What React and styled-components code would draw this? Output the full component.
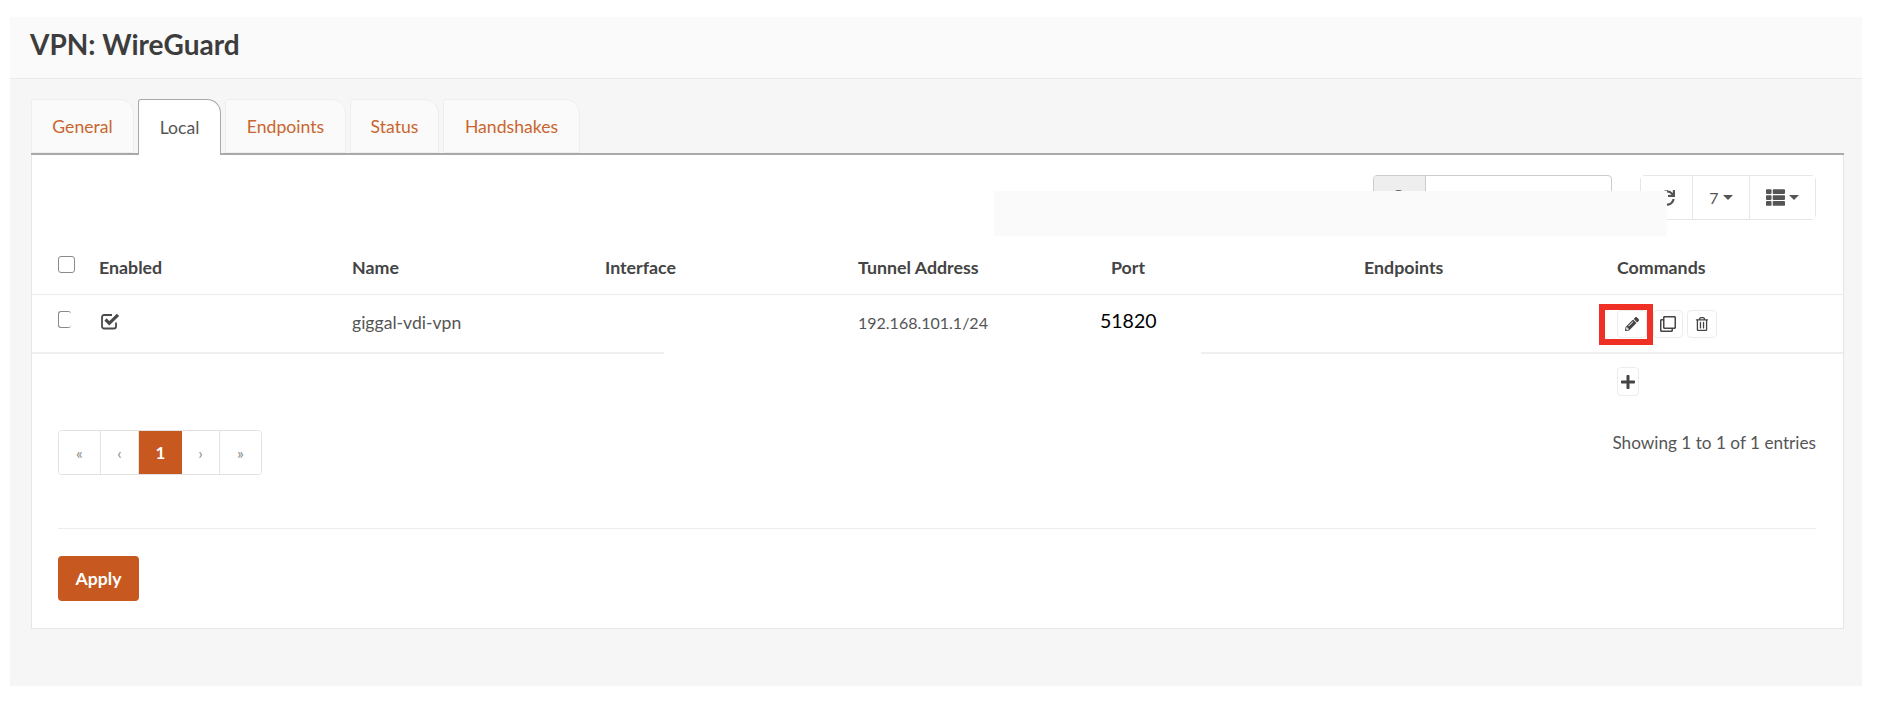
import React from 'react';
import styled, { createGlobalStyle } from 'styled-components';
import {
  FaPencilAlt,
  FaRegClone,
  FaRegTrashAlt,
  FaPlus,
  FaSync,
  FaThList,
  FaSearch,
} from 'react-icons/fa';

const orange = '#c75820';
const line = '#ececec';

const GlobalStyle = createGlobalStyle`
  html, body {
    margin: 0;
    background: #fff;
    font-family: Lato, "Open Sans", sans-serif;
    color: #4a4a4a;
  }
`;

const Page = styled.div`
  position: relative;
  width: 1882px;
  height: 712px;
  padding: 17px 20px 0 10px;
  box-sizing: border-box;
  overflow: hidden;
`;

const Shell = styled.div`
  background: #f6f6f6;
  height: 669px;
`;

const TitleBar = styled.header`
  height: 61px;
  background: #fafafa;
  border-bottom: 1px solid #e9e9e9;
  padding-left: 20px;
  display: flex;
  align-items: center;
`;

const Title = styled.h1`
  margin: 0;
  font-size: 28px;
  font-weight: 700;
  color: #3d3d3d;
  position: relative;
  top: -4px;
`;

const Content = styled.main`
  padding: 20px 18px 0 21px;
`;

const TabBar = styled.nav`
  display: flex;
  gap: 4px;
  height: 56px;
  border-bottom: 2px solid #a9a9a9;
  box-sizing: border-box;
`;

const Tab = styled.a`
  box-sizing: border-box;
  width: ${p => p.$width}px;
  height: ${p => (p.$active ? 56 : 54)}px;
  display: flex;
  align-items: center;
  justify-content: center;
  font-size: 17.6px;
  border-radius: 3px 14px 0 0;
  color: ${p => (p.$active ? '#555' : '#c9652f')};
  background: ${p => (p.$active ? '#fff' : '#fafafa')};
  border: 1px solid ${p => (p.$active ? '#a9a9a9' : '#eeeeee')};
  border-bottom: ${p => (p.$active ? '0' : '1px solid #eee')};
`;

const Panel = styled.section`
  box-sizing: border-box;
  height: 474px;
  background: #fff;
  border: 1px solid #e6e6e6;
  border-top: 0;
`;

const Toolbar = styled.div`
  display: flex;
  justify-content: flex-end;
  gap: 28px;
  padding: 20px 27px 0 0;
  height: 45px;
`;

const SearchBox = styled.div`
  box-sizing: border-box;
  width: 239px;
  height: 45px;
  display: flex;
  border: 1px solid #ccc;
  border-radius: 4px;
  overflow: hidden;
`;

const SearchAddon = styled.span`
  width: 51px;
  background: #eee;
  border-right: 1px solid #ccc;
  display: flex;
  align-items: center;
  justify-content: center;
  color: #555;
  font-size: 16px;
`;

const ButtonGroup = styled.div`
  box-sizing: border-box;
  display: flex;
  height: 45px;
  border: 1px solid #e6e6e6;
  border-radius: 5px;
`;

const GroupButton = styled.button`
  box-sizing: border-box;
  width: ${p => p.$width}px;
  border: 0;
  border-right: ${p => (p.$last ? '0' : '1px solid #e6e6e6')};
  background: #fff;
  display: flex;
  align-items: center;
  justify-content: center;
  gap: 4px;
  padding: 0;
  color: #555;
  font-family: inherit;
  font-size: 16px;
`;

const Caret = styled.i`
  width: 0;
  height: 0;
  border-left: 5px solid transparent;
  border-right: 5px solid transparent;
  border-top: 5px solid #555;
`;

const Row = styled.div`
  display: grid;
  grid-template-columns: 41px repeat(6, 253px) 1fr;
  padding-left: 26px;
  box-sizing: border-box;
`;

const HeadRow = styled(Row)`
  padding-top: 36px;
  padding-bottom: 16px;
  border-bottom: 1px solid ${line};
  font-size: 17.8px;
  font-weight: 700;
  line-height: 22px;
  color: #444;
`;

const BodyRow = styled(Row)`
  height: 59px;
  padding-top: 15px;
  border-bottom: 2px solid #efefef;
  font-size: 17.6px;
  line-height: 22px;
  color: #555;
`;

const Cell = styled.div`
  padding-top: ${p => p.$top || 0}px;
`;

const AddressCell = styled(Cell)`
  font-size: 16px;
`;

const Check = styled.span`
  display: block;
  box-sizing: border-box;
  width: ${p => (p.$open ? 13 : 17)}px;
  height: 17px;
  margin-top: ${p => (p.$open ? 1 : 0)}px;
  border: 1.5px solid #8a8a8a;
  border-right: ${p => (p.$open ? '0' : '1.5px solid #8a8a8a')};
  border-radius: 3px;
  background: #fff;
`;

const EnabledIcon = styled.svg`
  display: block;
  width: 19px;
  height: 17px;
  margin: 3px 0 0 2px;
  color: #4a4a4a;
`;

const PortValue = styled(Cell)`
  margin-left: -11px;
  color: #000;
  font-size: 19.5px;
`;

const Commands = styled.div`
  display: flex;
  align-items: flex-start;
  gap: 4px;
`;

const EditWrap = styled.div`
  position: relative;
  margin-right: 2px;
`;

const Highlight = styled.span`
  position: absolute;
  left: -18px;
  top: -6px;
  right: -6px;
  bottom: -7px;
  border: 6px solid #ee3124;
  pointer-events: none;
`;

const IconButton = styled.button`
  box-sizing: border-box;
  width: ${p => p.$width || 30}px;
  height: ${p => p.$height || 28}px;
  background: #fff;
  border: 1px solid #ececec;
  border-radius: 4px;
  padding: 0;
  display: flex;
  align-items: center;
  justify-content: center;
  color: #444;
  font-size: ${p => p.$size || 14}px;
`;

const AddRow = styled(Row)`
  padding-top: 13px;
`;

const PlusSlot = styled.div`
  grid-column: 8;
`;

const Footer = styled.div`
  display: flex;
  justify-content: space-between;
  align-items: flex-start;
  padding: 34px 27px 0 26px;
`;

const Pager = styled.div`
  display: flex;
  height: 45px;
  box-sizing: border-box;
  border: 1px solid #e2e2e2;
  border-radius: 4px;
  overflow: hidden;
`;

const PageCell = styled.span`
  box-sizing: border-box;
  width: ${p => p.$width}px;
  display: flex;
  align-items: center;
  justify-content: center;
  font-size: ${p => (p.$active ? 17 : 16)}px;
  font-weight: ${p => (p.$active ? 700 : 400)};
  color: ${p => (p.$active ? '#fff' : '#888')};
  background: ${p => (p.$active ? orange : '#fff')};
  border-right: ${p => (p.$last || p.$active ? '0' : '1px solid #e2e2e2')};
`;

const Entries = styled.div`
  font-size: 17.2px;
  line-height: 22px;
  margin-top: 2px;
  color: #555;
`;

const Divider = styled.hr`
  margin: 53px 27px 0 26px;
  border: 0;
  border-top: 1px solid ${line};
`;

const ApplyButton = styled.button`
  display: block;
  margin: 27px 0 0 26px;
  width: 81px;
  height: 45px;
  border: 0;
  border-radius: 4px;
  background: ${orange};
  color: #fff;
  font-family: inherit;
  font-size: 17.6px;
  font-weight: 700;
`;

// the screenshot has two painted-over areas, they sit on top of the page
const Patch = styled.div`
  position: absolute;
  left: ${p => p.$left}px;
  top: ${p => p.$top}px;
  width: ${p => p.$w}px;
  height: ${p => p.$h}px;
  background: ${p => p.$color};
`;

const tabs = [
  { label: 'General', width: 103 },
  { label: 'Local', width: 83, active: true },
  { label: 'Endpoints', width: 121 },
  { label: 'Status', width: 89 },
  { label: 'Handshakes', width: 137 },
];

const pages = [
  { label: '«', width: 42 },
  { label: '‹', width: 38 },
  { label: '1', width: 43, active: true },
  { label: '›', width: 38 },
  { label: '»', width: 41, last: true },
];

const App = () => (
  <Page>
    <GlobalStyle />
    <Shell>
      <TitleBar>
        <Title>VPN: WireGuard</Title>
      </TitleBar>
      <Content>
        <TabBar>
          {tabs.map(t => (
            <Tab key={t.label} $width={t.width} $active={t.active}>
              {t.label}
            </Tab>
          ))}
        </TabBar>
        <Panel>
          <Toolbar>
            <SearchBox>
              <SearchAddon>
                <FaSearch />
              </SearchAddon>
            </SearchBox>
            <ButtonGroup>
              <GroupButton $width={52}>
                <FaSync />
              </GroupButton>
              <GroupButton $width={57}>
                7 <Caret />
              </GroupButton>
              <GroupButton $width={65} $last>
                <FaThList size={19} /> <Caret />
              </GroupButton>
            </ButtonGroup>
          </Toolbar>
          <HeadRow>
            <Cell>
              <Check />
            </Cell>
            <Cell>Enabled</Cell>
            <Cell>Name</Cell>
            <Cell>Interface</Cell>
            <Cell>Tunnel Address</Cell>
            <Cell>Port</Cell>
            <Cell>Endpoints</Cell>
            <Cell>Commands</Cell>
          </HeadRow>
          <BodyRow>
            <Cell>
              <Check $open />
            </Cell>
            <Cell>
              <EnabledIcon viewBox="0 0 19 17" fill="none" stroke="currentColor">
                <path d="M15 9.5V13.5a2 2 0 0 1-2 2H3a2 2 0 0 1-2-2V4a2 2 0 0 1 2-2H11" strokeWidth="1.8" />
                <path d="M4.5 6.5l3.8 3.8L17 1.8" strokeWidth="3.2" />
              </EnabledIcon>
            </Cell>
            <Cell $top={2}>giggal-vdi-vpn</Cell>
            <Cell />
            <AddressCell $top={2}>192.168.101.1/24</AddressCell>
            <PortValue>51820</PortValue>
            <Cell />
            <Commands>
              <EditWrap>
                <IconButton>
                  <FaPencilAlt />
                </IconButton>
                <Highlight />
              </EditWrap>
              <IconButton>
                <FaRegClone size={16} />
              </IconButton>
              <IconButton>
                <FaRegTrashAlt />
              </IconButton>
            </Commands>
          </BodyRow>
          <AddRow>
            <PlusSlot>
              <IconButton $width={22} $height={29} $size={16}>
                <FaPlus />
              </IconButton>
            </PlusSlot>
          </AddRow>
          <Footer>
            <Pager>
              {pages.map(p => (
                <PageCell key={p.label} $width={p.width} $active={p.active} $last={p.last}>
                  {p.label}
                </PageCell>
              ))}
            </Pager>
            <Entries>Showing 1 to 1 of 1 entries</Entries>
          </Footer>
          <Divider />
          <ApplyButton>Apply</ApplyButton>
        </Panel>
      </Content>
    </Shell>
    <Patch $left={994} $top={191} $w={673} $h={45} $color="#fafafa" />
    <Patch $left={664} $top={351} $w={537} $h={5} $color="#fff" />
  </Page>
);

export default App;
